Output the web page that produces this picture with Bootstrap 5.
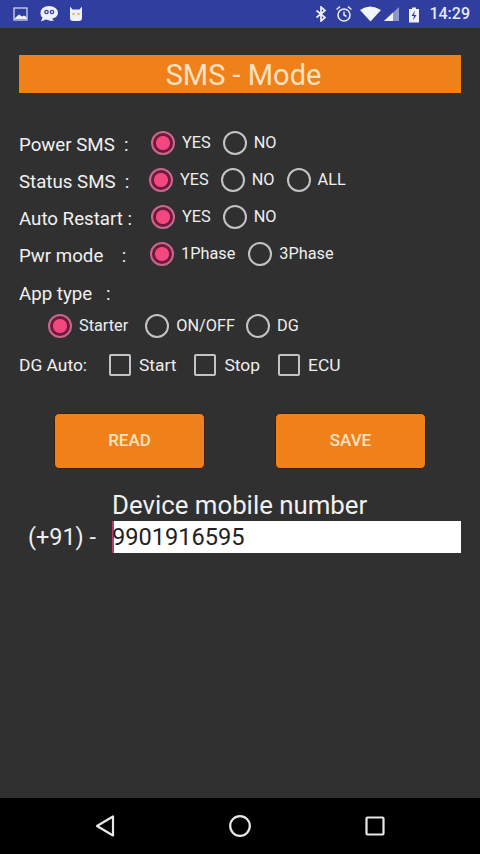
<!DOCTYPE html>
<html lang="en">
<head>
<meta charset="utf-8">
<title>SMS - Mode</title>
<link rel="stylesheet" href="https://cdn.jsdelivr.net/npm/bootstrap@5.3.0/dist/css/bootstrap.min.css">
<style>
html,body{height:100%}
body{background:#303030;color:#f1f1f1;font-family:Roboto,"Liberation Sans",sans-serif;width:480px;height:854px;overflow:hidden}
.shell{height:854px}
.statusbar{height:28px;background:#2f3e9f;color:#e6e9f6;padding:0 10px 0 13px;font-size:16px;font-weight:500}
.ic-l{margin-right:10px}
.ic-bt{margin-right:8px}
.ic-al{margin-right:7px}
.ic-wf{margin-right:2px}
.ic-sg{margin-right:8px}
.st-time{margin-left:9px}
.navbar-bottom{height:56px;background:#000}
.banner{height:38px;margin:27px 19px 0;padding-left:7px;background:#f0801a;color:#fde2c2;font-size:29px;line-height:41px}
.opts{margin-top:31px}
.opt-row{height:37px;padding-left:19px;font-size:16.3px}
.opt-row.gap-app{margin-top:4px;height:36px}
.opt-row.row-starter{height:28px;padding-left:48px}
.opt-row.row-dg{height:50px;padding-left:19px}
.lbl{font-size:18.7px;white-space:pre;padding-top:5px}
.gap-app .lbl{padding-top:0}
.lbl-w{width:132px}
.lbl-s{width:130px}
.lbl-p{width:131px}
.dg-lbl{font-size:17.4px;width:90px;padding-top:0}
.form-check-input.rd,.form-check-input.cb{margin:0;flex:none;background-color:transparent;box-shadow:none}
.form-check-input.rd{width:24px;height:24px;border:2.5px solid #c4c4c4;border-radius:50%}
.form-check-input.rd:checked{background-color:#7f1f45;border-color:#c9688d;background-image:radial-gradient(circle,#f2487f 0 6.5px,#6f1a3c 7.5px)}
.form-check-input.cb{width:22px;height:22px;border:2.5px solid #c4c4c4;border-radius:2px}
.opt-txt{margin:0 12px 0 7px;color:#eee;white-space:nowrap;line-height:24px}
.mr-p{margin-right:13px}
.mr-w{margin-right:17px}
.mr-n{margin-right:11px}
.cb-txt{font-size:17.4px;margin-left:8px;margin-right:18px}
.actions{margin:23px 54px 0}
.btn.act{width:151px;height:56px;background:#f0801a;border:1px solid #3e1d05;border-radius:5px;color:#fde2c2;font-size:17px;font-weight:500;padding:0}
.phone-head{margin:20px 0 0 112px;font-size:25.8px;line-height:32px;color:#f1f1f1}
.phone-row{padding-left:28px;font-size:23.4px;height:32px}
.phone-pre{width:84px;color:#eee;padding-top:1px}
.phone-in{width:349px;height:32px;background:#fff;color:#222;border:0;box-shadow:inset 2px 0 #b33a6b;border-radius:0;font-size:23.6px;padding:0;line-height:32px;font-family:Roboto,"Liberation Sans",sans-serif}
.nav-keys{padding:0 95px}
.navbar-bottom svg{display:block}
</style>
</head>
<body>
<div class="shell d-flex flex-column">
  <div class="statusbar d-flex align-items-center">
    <svg width="16" height="16" viewBox="0 0 16 16" class="ic-l"><rect x="1" y="2" width="13" height="12" fill="none" stroke="#dfe3f5" stroke-width="1.2"/><path d="M2 12 L6 8.5 L9 10.5 L11 9.5 L13.5 11 V13 H2Z" fill="#eef0fa"/></svg>
    <svg width="20" height="18" viewBox="0 0 20 18" class="ic-l"><path d="M10 1C5 1 1.500 4 1.500 8c0 2 .6 3.500 2 4.500L2 16.500 7 14.500 12 16l3-.5-2-2c4-.5 6-3 6-6C19 4 15 1 10 1Z" fill="#eef0fa"/><circle cx="7.500" cy="7" r="2.300" fill="#39479f"/><circle cx="13" cy="7" r="2.300" fill="#39479f"/><circle cx="7.500" cy="7" r="1" fill="#eef0fa"/><circle cx="13" cy="7" r="1" fill="#eef0fa"/></svg>
    <svg width="14" height="18" viewBox="0 0 14 18"><path d="M1 1.500 3.500 4.500h7L13 1.500V13a3 3 0 0 1-3 3H4a3 3 0 0 1-3-3Z" fill="#eef0fa"/><circle cx="4.500" cy="9" r="1.300" fill="#e9b65c"/><circle cx="9.500" cy="9" r="1.300" fill="#e9b65c"/></svg>
    <div class="ms-auto d-flex align-items-center">
      <svg width="12" height="16" viewBox="0 0 12 16" class="ic-bt"><path d="M1.500 4.500 10 11.500 6 15V1l4 3.500L1.500 11.500" fill="none" stroke="#eef0fa" stroke-width="1.700"/></svg>
      <svg width="18" height="18" viewBox="0 0 18 18" class="ic-al"><circle cx="9" cy="10" r="6" fill="none" stroke="#e6e9f6" stroke-width="1.600"/><path d="M9 6.500V10l2.500 1.500M1.500 4.500 5 1.700M16.500 4.500 13 1.700" fill="none" stroke="#e6e9f6" stroke-width="1.500"/></svg>
      <svg width="22" height="16" viewBox="0 0 22 16" class="ic-wf"><path d="M0 4Q10-3 21 4L10.500 15.500Z" fill="#f4f5fb"/></svg>
      <svg width="16" height="16" viewBox="0 0 16 16" class="ic-sg"><path d="M0 15 15 1v14Z" fill="#8d96cb"/><path d="M0 15 9 6.600V15Z" fill="#f0f1f9"/></svg>
      <svg width="12" height="17" viewBox="0 0 12 17"><path d="M1 3h3V1.500h4V3h3v13.500H1Z" fill="#f0f1f9"/><path d="M7 4.500 3.500 10H6l-1 4.500L8.500 9H6Z" fill="#2f3e9f"/></svg>
      <span class="st-time">14:29</span>
    </div>
  </div>

  <main class="flex-grow-1">
    <div class="banner text-center">SMS - Mode</div>

    <form class="opts">
      <div class="opt-row d-flex align-items-center">
        <span class="lbl lbl-w">Power SMS  :</span>
        <input class="form-check-input rd" type="radio" name="p" checked><span class="opt-txt">YES</span>
        <input class="form-check-input rd" type="radio" name="p"><span class="opt-txt">NO</span>
      </div>
      <div class="opt-row d-flex align-items-center">
        <span class="lbl lbl-s">Status SMS  :</span>
        <input class="form-check-input rd" type="radio" name="s" checked><span class="opt-txt">YES</span>
        <input class="form-check-input rd" type="radio" name="s"><span class="opt-txt">NO</span>
        <input class="form-check-input rd" type="radio" name="s"><span class="opt-txt">ALL</span>
      </div>
      <div class="opt-row d-flex align-items-center">
        <span class="lbl lbl-w">Auto Restart :</span>
        <input class="form-check-input rd" type="radio" name="a" checked><span class="opt-txt">YES</span>
        <input class="form-check-input rd" type="radio" name="a"><span class="opt-txt">NO</span>
      </div>
      <div class="opt-row d-flex align-items-center">
        <span class="lbl lbl-p">Pwr mode    :</span>
        <input class="form-check-input rd" type="radio" name="w" checked><span class="opt-txt mr-p">1Phase</span>
        <input class="form-check-input rd" type="radio" name="w"><span class="opt-txt">3Phase</span>
      </div>
      <div class="opt-row gap-app d-flex align-items-center">
        <span class="lbl">App type   :</span>
      </div>
      <div class="opt-row row-starter d-flex align-items-center">
        <input class="form-check-input rd" type="radio" name="t" checked><span class="opt-txt mr-w">Starter</span>
        <input class="form-check-input rd" type="radio" name="t"><span class="opt-txt mr-n">ON/OFF</span>
        <input class="form-check-input rd" type="radio" name="t"><span class="opt-txt">DG</span>
      </div>
      <div class="opt-row row-dg d-flex align-items-center">
        <span class="lbl dg-lbl">DG Auto:</span>
        <input class="form-check-input cb" type="checkbox"><span class="opt-txt cb-txt">Start</span>
        <input class="form-check-input cb" type="checkbox"><span class="opt-txt cb-txt">Stop</span>
        <input class="form-check-input cb" type="checkbox"><span class="opt-txt cb-txt">ECU</span>
      </div>
    </form>

    <div class="actions d-flex justify-content-between">
      <button type="button" class="btn act">READ</button>
      <button type="button" class="btn act">SAVE</button>
    </div>

    <div class="phone-head">Device mobile number</div>
    <div class="phone-row d-flex align-items-center">
      <span class="phone-pre">(+91) -</span>
      <input class="phone-in" type="text" value="9901916595">
    </div>
  </main>

  <nav class="navbar-bottom d-flex align-items-center">
    <div class="nav-keys d-flex justify-content-between align-items-center w-100">
      <svg width="20" height="24" viewBox="0 0 20 24"><path d="M18 2.500V21.500L2 12Z" fill="none" stroke="#e8e8e8" stroke-width="2.200" stroke-linejoin="round"/></svg>
      <svg width="24" height="24" viewBox="0 0 24 24"><circle cx="12" cy="12" r="9.800" fill="none" stroke="#e8e8e8" stroke-width="2.200"/></svg>
      <svg width="20" height="20" viewBox="0 0 20 20"><rect x="1.500" y="1.500" width="17" height="17" rx="1" fill="none" stroke="#e8e8e8" stroke-width="2.200"/></svg>
    </div>
  </nav>
</div>
<script src="https://cdn.jsdelivr.net/npm/bootstrap@5.3.0/dist/js/bootstrap.bundle.min.js"></script>
</body>
</html>
